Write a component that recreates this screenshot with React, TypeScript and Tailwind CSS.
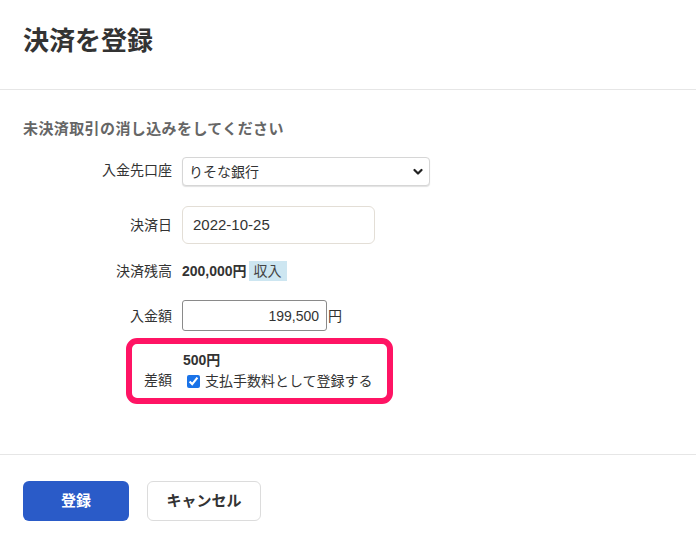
import React from "react";

const font = { fontFamily: '"Liberation Sans", "Noto Sans CJK JP", sans-serif' };

export default function App() {
  return (
    <div className="w-[696px] h-[543px] bg-white text-[#333] text-[14px] font-['Liberation_Sans','Noto_Sans_CJK_JP',sans-serif]" style={font}>
      <div className="h-[90px] border-b border-[#e6e6e6] px-[23px] pt-[25px]">
        <h1 className="text-[26px] leading-[32px] font-bold text-[#333]">決済を登録</h1>
      </div>
      <div className="px-[23px] pt-[29px] pb-[50px] border-b border-[#e6e6e6]">
        <div className="text-[15px] tracking-[0.4px] leading-[20px] font-bold text-[#666]">未決済取引の消し込みをしてください</div>

        <div className="mt-[18px] flex items-center gap-[10px] h-[29px]">
          <div className="w-[149px] text-right leading-[20px] -mt-[3px]">入金先口座</div>
          <div className="relative w-[248px] h-[29px] rounded-[4px] border border-[#d6d6d6] shadow-[0_1px_1px_rgba(0,0,0,0.12)] bg-white flex items-center pl-[6px]">
            <span className="leading-[20px] mt-[1px]">りそな銀行</span>
            <svg className="absolute right-[6px] top-[10px]" width="10" height="8" viewBox="0 0 10 8">
              <path d="M1.5 2 L5 5.5 L8.5 2" fill="none" stroke="#222" strokeWidth="2.2" strokeLinecap="round" strokeLinejoin="round" />
            </svg>
          </div>
        </div>

        <div className="mt-[20px] flex items-center gap-[10px] h-[38px]">
          <div className="w-[149px] text-right leading-[20px]">決済日</div>
          <div className="w-[193px] h-[38px] rounded-[6px] border border-[#e3ded6] bg-white flex items-center pl-[10px]">
            <span className="text-[15px] leading-[20px]">2022-10-25</span>
          </div>
        </div>

        <div className="mt-[17px] flex items-center gap-[10px] h-[20px]">
          <div className="w-[149px] text-right leading-[20px]">決済残高</div>
          <div className="flex items-center">
            <span className="font-bold leading-[20px]">200,000円</span>
            <span className="ml-[2px] bg-[#cde6f1] px-[5px] h-[20px] leading-[20px] text-[#444]">収入</span>
          </div>
        </div>

        <div className="mt-[19px] flex items-center gap-[10px] h-[31px]">
          <div className="w-[149px] text-right leading-[20px]">入金額</div>
          <div className="flex items-center">
            <div className="w-[145px] h-[31px] rounded-[3px] border border-[#8a8a8a] bg-white flex items-center justify-end pr-[7px]">
              <span className="leading-[20px]">199,500</span>
            </div>
            <span className="ml-[1px] leading-[20px]">円</span>
          </div>
        </div>

        <div className="mt-[7px] ml-[103px] w-[267px] h-[66px] rounded-[11px] border-[6px] border-[#ff1464] flex items-end pb-[5px]">
          <div className="w-[40px] text-right leading-[20px] mb-[3px]">差額</div>
          <div className="ml-[11px]">
            <div className="font-bold leading-[20px] -mb-[1px]">500円</div>
            <label className="flex items-center h-[24px]">
              <input type="checkbox" defaultChecked className="ml-[4px] mr-[5px] w-[13px] h-[13px] accent-[#1a73e8]" />
              <span className="leading-[20px]">支払手数料として登録する</span>
            </label>
          </div>
        </div>
      </div>
      <div className="px-[23px] pt-[26px] flex gap-[18px]">
        <button className="w-[106px] h-[40px] rounded-[6px] bg-[#2a5bc8] text-white font-bold text-[15px]">登録</button>
        <button className="w-[114px] h-[40px] rounded-[6px] border border-[#dcdcdc] bg-white text-[#333] font-bold text-[15px]">キャンセル</button>
      </div>
    </div>
  );
}
